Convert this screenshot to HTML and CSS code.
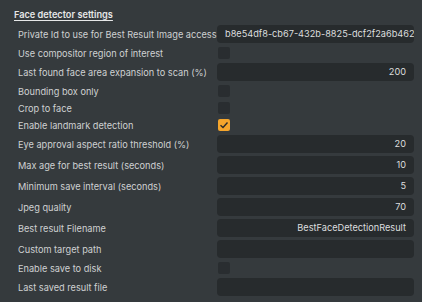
FILE: index.html
```html
<!DOCTYPE html>
<html lang="en">
  <head>
    <meta charset="UTF-8" />
    <title>Face detector settings</title>
    <link rel="stylesheet" href="styles.css">
  </head>
  <body>
    <div class="fd-panel">
      <div class="fd-title">Face detector settings</div>
      <div class="fd-row">
        <span class="fd-label">Private Id to use for Best Result Image access</span>
        <div class="fd-field left">b8e54df8-cb67-432b-8825-dcf2f2a6b462</div>
      </div>
      <div class="fd-row check">
        <span class="fd-label">Use compositor region of interest</span>
        <span class="fd-box"></span>
      </div>
      <div class="fd-row">
        <span class="fd-label">Last found face area expansion to scan (%)</span>
        <div class="fd-field">200</div>
      </div>
      <div class="fd-row check">
        <span class="fd-label">Bounding box only</span>
        <span class="fd-box"></span>
      </div>
      <div class="fd-row check">
        <span class="fd-label">Crop to face</span>
        <span class="fd-box"></span>
      </div>
      <div class="fd-row check">
        <span class="fd-label">Enable landmark detection</span>
        <span class="fd-box on">
          <svg width="12" height="12" viewBox="0 0 12 12">
            <path d="M2.5 6.2 L5 8.5 L9.5 3.5" fill="none" stroke="#2b2b2b" stroke-width="1.4" />
          </svg>
        </span>
      </div>
      <div class="fd-row">
        <span class="fd-label">Eye approval aspect ratio threshold (%)</span>
        <div class="fd-field">20</div>
      </div>
      <div class="fd-row">
        <span class="fd-label">Max age for best result (seconds)</span>
        <div class="fd-field">10</div>
      </div>
      <div class="fd-row">
        <span class="fd-label">Minimum save interval (seconds)</span>
        <div class="fd-field">5</div>
      </div>
      <div class="fd-row">
        <span class="fd-label">Jpeg quality</span>
        <div class="fd-field">70</div>
      </div>
      <div class="fd-row">
        <span class="fd-label">Best result Filename</span>
        <div class="fd-field">BestFaceDetectionResult</div>
      </div>
      <div class="fd-row">
        <span class="fd-label">Custom target path</span>
        <div class="fd-field"></div>
      </div>
      <div class="fd-row check">
        <span class="fd-label">Enable save to disk</span>
        <span class="fd-box"></span>
      </div>
      <div class="fd-row">
        <span class="fd-label">Last saved result file</span>
        <div class="fd-field"></div>
      </div>
    </div>
  </body>
</html>
```

FILE: styles.css
```css
body {
  margin: 0;
  background: #353a3d;
  font-family: "Inter", "Noto Sans", sans-serif;
  font-size: 9.2px;
  color: #cfd1d2;
  height: 302px;
  overflow: hidden;
}
.fd-panel {
  display: flex;
  flex-direction: column;
  gap: 3px;
  padding-top: 8px;
}
.fd-title {
  padding-left: 14px;
  height: 14px;
  line-height: 14px;
  font-weight: 600;
  color: #e6e7e8;
  text-decoration: underline;
  text-underline-offset: 2px;
}
.fd-row {
  display: grid;
  grid-template-columns: 199px 197px;
  align-items: center;
  padding-left: 18px;
  height: 18px;
}
.fd-row.check {
  height: 14px;
}
.fd-label {
  white-space: nowrap;
}
.fd-field {
  height: 18px;
  line-height: 18px;
  background: #272b2d;
  border-radius: 4px;
  padding: 0 8px;
  text-align: right;
  white-space: nowrap;
  overflow: hidden;
  color: #dcdedf;
}
.fd-field.left {
  text-align: left;
  text-overflow: clip;
  padding-right: 1px;
}
.fd-box {
  width: 12px;
  height: 12px;
  margin-left: 1px;
  border-radius: 2px;
  background: #292d30;
  display: flex;
}
.fd-box.on {
  background: #f5a52c;
}
```
